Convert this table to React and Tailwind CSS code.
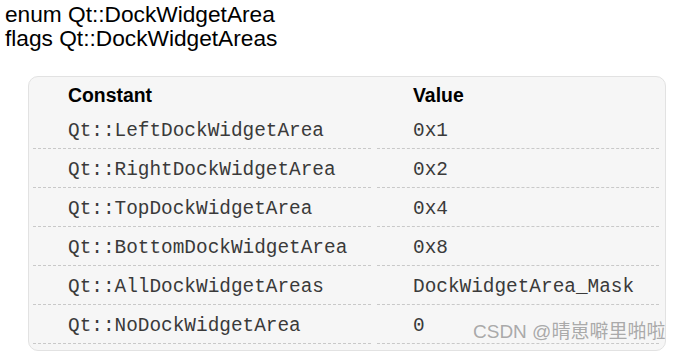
import React from "react";

const rows = [
  ["Qt::LeftDockWidgetArea", "0x1"],
  ["Qt::RightDockWidgetArea", "0x2"],
  ["Qt::TopDockWidgetArea", "0x4"],
  ["Qt::BottomDockWidgetArea", "0x8"],
  ["Qt::AllDockWidgetAreas", "DockWidgetArea_Mask"],
  ["Qt::NoDockWidgetArea", "0"],
];

export default function App() {
  return (
    <div className="relative w-[683px] h-[353px] bg-white overflow-hidden font-['Liberation_Sans',Arial,sans-serif] text-black">
      <div className="pt-[2px] pl-[5px] text-[22.7px] leading-[24px]">
        <div>enum Qt::DockWidgetArea</div>
        <div>flags Qt::DockWidgetAreas</div>
      </div>
      <div className="mt-[26px] ml-[28px] w-[638px] rounded-[10px] border border-[#e2e2e2] bg-[#f6f6f6] pl-[4px] pr-[6px] pb-[6px]">
        <div className="flex gap-[6px] h-[33px] pt-[4px] items-center font-bold text-[19.4px]">
          <div className="w-[338px] pl-[35px]">Constant</div>
          <div className="flex-1 pl-[36px]">Value</div>
        </div>
        {rows.map(([name, value]) => (
          <div key={name} className="flex gap-[6px] h-[39px] font-['Courier_New',Courier,'Liberation_Mono',monospace] text-[19.4px] text-[#3a3a3a]">
            <div className="w-[338px] pl-[35px] pt-[6px] flex items-center border-b border-dashed border-[#c9c9c9]">{name}</div>
            <div className="flex-1 pl-[36px] pt-[6px] flex items-center border-b border-dashed border-[#c9c9c9]">{value}</div>
          </div>
        ))}
      </div>
      <div className="absolute left-[473px] top-[320px] text-[19px] leading-[24px] text-[#a0a0a0]/90 font-['Liberation_Sans','Noto_Sans_CJK_SC',sans-serif]">
        CSDN @晴崽噼里啪啦
      </div>
    </div>
  );
}
